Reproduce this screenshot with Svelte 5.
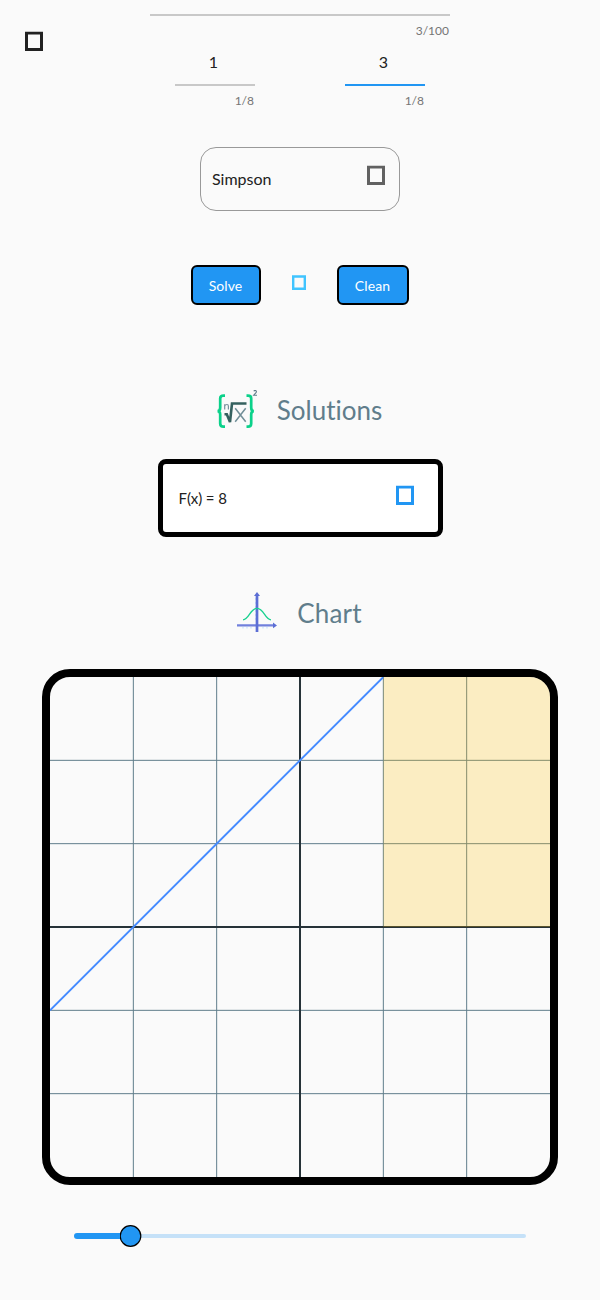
<script>
  let lower = $state('1');
  let upper = $state('3');
  const cells = [1, 2, 4, 5];
  const unit = 500 / 6;
  const zoom = 12.5;
</script>

{#snippet box(kind)}
  {#if kind === 'small'}
    <svg class="small" width="14" height="15" viewBox="0 0 14 15"><path fill-rule="evenodd" d="M0 .3H14V15H0ZM2.4 2.7V12.5H11.6V2.7Z" fill="currentColor" /></svg>
  {:else}
    <svg width="18" height="20" viewBox="0 0 18 20"><path fill-rule="evenodd" d="M0 .75H18V20H0ZM3 3.5V17H15V3.5Z" fill="currentColor" /></svg>
  {/if}
{/snippet}

<main>
  <header>
    <button class="menu" aria-label="Menu">{@render box('large')}</button>
    <div class="function"><span>3/100</span></div>
    <div class="limits">
      <label><b>{lower}</b><span>{lower.length}/8</span></label>
      <label class="active"><b>{upper}</b><span>{upper.length}/8</span></label>
    </div>
  </header>

  <div class="select"><span>Simpson</span><i>{@render box('large')}</i></div>

  <div class="actions">
    <button class="solve">Solve</button>
    <i>{@render box('small')}</i>
    <button class="clean">Clean</button>
  </div>

  <h2 class="solutions">
    <svg width="40" height="40" viewBox="0 0 40 40" fill="none">
      <path d="M8 5.7H6.5Q3.2 5.7 3.2 8.5V17.5Q3.2 21.1 .5 21.1Q3.2 21.1 3.2 24.5V33.5Q3.2 36.7 6.5 36.7H8M29.5 5.7H31Q34.2 5.7 34.2 8.5V17.5Q34.2 21.1 36.9 21.1Q34.2 21.1 34.2 24.5V33.5Q34.2 36.7 31 36.7H29.5" stroke="#0bd18a" stroke-width="2.7" />
      <path d="M7.5 24.3H9.8L13 32L15 13.5H29.5" stroke="#35615f" stroke-width="2.6" />
      <path d="M7.7 19.5V14.2M7.7 16Q8.2 14.5 10 14.5Q11.4 14.5 11.4 16.3V19.5" stroke="#78909c" stroke-width="1.2" />
      <path d="M18.2 18.2L28.7 31.7M28.7 18.2L18.2 31.7" stroke="#708e97" stroke-width="1.5" />
      <path d="M36.8 1.2Q37.2 .3 38.2 .4Q40.1 .8 39 2.6L36.7 5.2H40" stroke="#607d8b" stroke-width="1.1" />
    </svg>
    <span>Solutions</span>
  </h2>

  <div class="result"><span>F(x) = 8</span><i>{@render box('large')}</i></div>

  <h2 class="charttitle">
    <svg width="40" height="40" viewBox="0 0 40 40" fill="none">
      <path d="M18 7H20M18 11H20M18 15H20M18 19H20M18 23H20M18 27H20M6 35V36.5M10 35V36.5M14 35V36.5M26 35V36.5M30 35V36.5" stroke="#b9ddff" stroke-width="1" />
      <path d="M0 33.4H38" stroke="#7180dc" stroke-width="2.2" />
      <path d="M20 40V3" stroke="#5c6ed5" stroke-width="2.7" />
      <path d="M17 4L20 0L23 4ZM36 30.5L40 33.4L36 36.3Z" fill="#5c6ed5" />
      <path d="M6 27.8C12 27.8 13 16.4 20 16.4S28 27.8 34 27.8" stroke="#18d18f" stroke-width="1.3" />
    </svg>
    <span>Chart</span>
  </h2>

  <div class="chart">
    <svg width="500" height="500" viewBox="0 0 500 500">
      {#each cells as n}
        <path d="M{n * unit} 0V500M0 {n * unit}H500" stroke="#607d8b" stroke-width="1" />
      {/each}
      <path d="M250 0V500M0 250H500" stroke="#263238" stroke-width="2" />
      <path d="M0 {4 * unit}L{4 * unit} 0" stroke="#448aff" stroke-width="1.9" />
      <rect x={4 * unit} width={2 * unit} height="250" fill="#ffc107" fill-opacity=".23" />
    </svg>
  </div>

  <div class="slider">
    <div class="filled" style="width: {zoom}%"></div>
    <svg class="thumb" width="22" height="22" viewBox="0 0 22 22"><circle cx="10.5" cy="11" r="10.3" fill="#2196f3" stroke="#000" stroke-width="1.2" /></svg>
    <div class="rest"></div>
  </div>
</main>

<style>
  :global(body) { background: #fafafa; }
  * { box-sizing: border-box; }
  main {
    width: 600px; height: 1300px; overflow: hidden;
    display: flex; flex-direction: column; align-items: center;
    background: #fafafa; color: #212121; font: 400 16px Lato, sans-serif;
    font-variant-ligatures: none;
  }
  svg { display: block; }
  i { font-style: normal; }
  button { font-family: inherit; padding: 0; }
  header { position: relative; width: 100%; height: 147px; flex-shrink: 0; padding-top: 14px; }
  .menu { position: absolute; left: 25px; top: 31px; border: 0; background: none; color: #212121; }
  .function { width: 300px; height: 36px; margin: 0 auto; border-top: 2px solid #c8c8c8; }
  .function span, label span { display: block; text-align: right; font-size: 12px; line-height: 14px; color: #757575; padding: 8px 1px 0 0; }
  .limits { display: flex; justify-content: center; gap: 90px; }
  label { width: 80px; }
  label b { display: block; height: 36px; border-bottom: 2px solid #c8c8c8; padding: 2px 3px 0 0; text-align: center; font-weight: 400; line-height: 20px; }
  label.active b { border-color: #2196f3; }
  .select { width: 200px; height: 64px; flex-shrink: 0; border: 1px solid #999; border-radius: 16px; padding: 0 14px 0 11px; display: flex; align-items: center; justify-content: space-between; }
  .select i { color: #616161; padding-bottom: 9px; }
  .select span { padding-bottom: 1px; }
  .actions { display: flex; align-items: center; width: 218px; height: 40px; flex-shrink: 0; margin-top: 54px; justify-content: space-between; }
  .actions button { height: 40px; border: 2px solid #000; border-radius: 6px; background: #2196f3; color: #fff; font-size: 14px; padding: 0 1px 0 0; letter-spacing: .1px; }
  .actions .solve { width: 70px; }
  .actions .clean { width: 72px; }
  .actions i { color: #40c4ff; padding: 0 0 5px; }
  h2 { display: flex; align-items: center; height: 40px; flex-shrink: 0; gap: 20px; margin: 0; font-size: 26px; font-weight: 400; color: #607d8b; }
  .solutions { margin-top: 85px; }
  .solutions svg { margin-left: -1px; }
  .result { width: 285px; height: 78px; flex-shrink: 0; margin-top: 29px; border: 5px solid #000; border-radius: 8px; background: #fff; padding: 0 23.5px 0 16px; display: flex; align-items: center; justify-content: space-between; font-size: 15px; letter-spacing: -.1px; }
  .result i { color: #2196f3; padding-bottom: 7px; }
  .charttitle { margin-top: 55px; }
  .charttitle span { padding: 1px 1px 0 0; letter-spacing: .15px; }
  .chart { width: 516px; height: 516px; flex-shrink: 0; margin-top: 37px; border: 8px solid #000; border-radius: 28px; overflow: hidden; }
  .slider { width: 452px; height: 22px; flex-shrink: 0; margin-top: 40px; display: flex; align-items: center; }
  .filled { height: 6px; flex-shrink: 0; border-radius: 3px 0 0 3px; background: #2196f3; }
  .thumb { flex-shrink: 0; margin: 0 -11px; z-index: 1; }
  .rest { flex: 1; height: 4px; border-radius: 0 2px 2px 0; background: #c5e1f8; }
</style>
